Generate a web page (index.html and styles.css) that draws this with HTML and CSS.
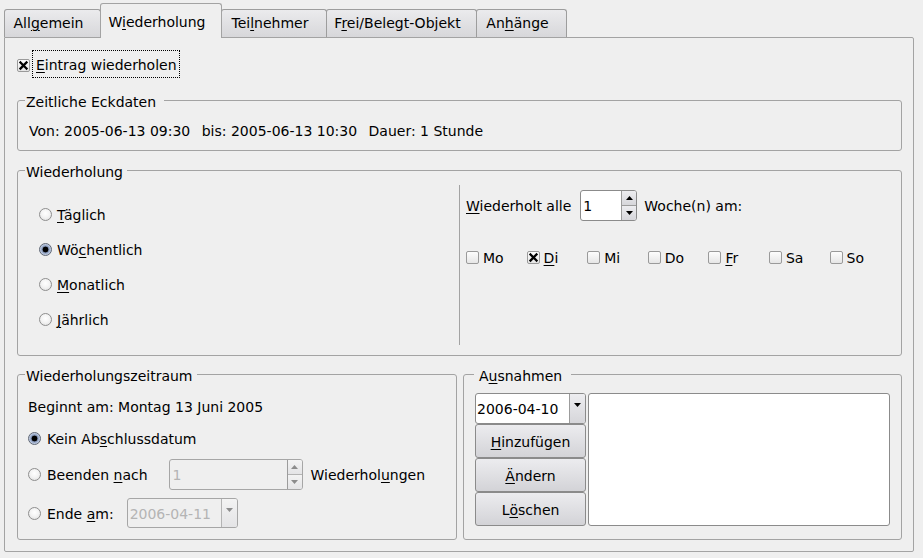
FILE: index.html
```html
<!DOCTYPE html>
<html lang="de">
<head>
<meta charset="utf-8">
<title>Wiederholung</title>
<link rel="stylesheet" href="styles.css">
</head>
<body>
<div class="window">
  <div class="tabbar">
    <div class="tab tab-allgemein">All<u>g</u>emein</div>
    <div class="tab tab-wiederholung active">W<u>i</u>ederholung</div>
    <div class="tab tab-teilnehmer">Tei<u>l</u>nehmer</div>
    <div class="tab tab-frei">F<u>r</u>ei/Belegt-Objekt</div>
    <div class="tab tab-anhaenge">An<u>h</u>änge</div>
  </div>

  <div class="panel">
    <div class="repeat-row">
      <span class="check checked"><svg width="11" height="11" viewBox="0 0 11 11"><path d="M2.5 2.5 L8.5 8.5 M8.5 2.5 L2.5 8.5" stroke="#000" stroke-width="2.3" stroke-linecap="square"/></svg></span>
      <span class="focus-label"><u>E</u>intrag wiederholen</span>
    </div>

    <fieldset class="group group-zeit">
      <legend>Zeitliche Eckdaten</legend>
      <div class="zeit-body">
        <span>Von: 2005-06-13 09:30</span>
        <span class="sep">bis: 2005-06-13 10:30</span>
        <span class="sep">Dauer: 1 Stunde</span>
      </div>
    </fieldset>

    <fieldset class="group group-wdh">
      <legend>Wiederholung</legend>
      <div class="wdh-body">
        <div class="freq">
          <div class="radio-row"><span class="radio"></span><span><u>T</u>äglich</span></div>
          <div class="radio-row"><span class="radio on"></span><span>Wö<u>c</u>hentlich</span></div>
          <div class="radio-row"><span class="radio"></span><span><u>M</u>onatlich</span></div>
          <div class="radio-row"><span class="radio"></span><span><u>J</u>ährlich</span></div>
        </div>
        <div class="weekly">
          <div class="interval-row">
            <span><u>W</u>iederholt alle</span>
            <div class="spin spin-interval">
              <span class="spin-value">1</span>
              <span class="spin-btns">
                <span class="spin-btn"><svg width="7" height="4" viewBox="0 0 7 4"><path d="M0 4 L3.5 0 L7 4Z"/></svg></span>
                <span class="spin-btn"><svg width="7" height="4" viewBox="0 0 7 4"><path d="M0 0 L7 0 L3.5 4Z"/></svg></span>
              </span>
            </div>
            <span>Woche(n) am:</span>
          </div>
          <div class="days">
            <div class="day"><span class="check"></span><span>Mo</span></div>
            <div class="day"><span class="check checked"><svg width="11" height="11" viewBox="0 0 11 11"><path d="M2.5 2.5 L8.5 8.5 M8.5 2.5 L2.5 8.5" stroke="#000" stroke-width="2.3" stroke-linecap="square"/></svg></span><span><u>D</u>i</span></div>
            <div class="day"><span class="check"></span><span>Mi</span></div>
            <div class="day"><span class="check"></span><span>Do</span></div>
            <div class="day"><span class="check"></span><span><u>F</u>r</span></div>
            <div class="day"><span class="check"></span><span>Sa</span></div>
            <div class="day"><span class="check"></span><span>So</span></div>
          </div>
        </div>
      </div>
    </fieldset>

    <div class="bottom">
      <fieldset class="group group-zeitraum">
        <legend>Wiederholungszeitraum</legend>
        <div class="zeitraum-body">
          <div class="begin">Beginnt am: Montag 13 Juni 2005</div>
          <div class="radio-row row-kein"><span class="radio on"></span><span>Kein Ab<u>s</u>chlussdatum</span></div>
          <div class="radio-row row-beenden">
            <span class="radio"></span><span>Beenden <u>n</u>ach</span>
            <div class="spin spin-count disabled">
              <span class="spin-value">1</span>
              <span class="spin-btns">
                <span class="spin-btn"><svg width="7" height="4" viewBox="0 0 7 4"><path d="M0 4 L3.5 0 L7 4Z"/></svg></span>
                <span class="spin-btn"><svg width="7" height="4" viewBox="0 0 7 4"><path d="M0 0 L7 0 L3.5 4Z"/></svg></span>
              </span>
            </div>
            <span class="after-spin">Wiederhol<u>u</u>ngen</span>
          </div>
          <div class="radio-row row-ende">
            <span class="radio"></span><span>Ende <u>a</u>m:</span>
            <div class="combo combo-ende disabled">
              <span class="combo-value">2006-04-11</span>
              <span class="combo-btn"><svg width="7" height="4" viewBox="0 0 7 4"><path d="M0 0 L7 0 L3.5 4Z"/></svg></span>
            </div>
          </div>
        </div>
      </fieldset>

      <fieldset class="group group-ausnahmen">
        <legend>A<u>u</u>snahmen</legend>
        <div class="ausnahmen-body">
          <div class="ausnahmen-controls">
            <div class="combo combo-date">
              <span class="combo-value">2006-04-10</span>
              <span class="combo-btn"><svg width="7" height="4" viewBox="0 0 7 4"><path d="M0 0 L7 0 L3.5 4Z"/></svg></span>
            </div>
            <div class="button"><u>H</u>inzufügen</div>
            <div class="button"><u>Ä</u>ndern</div>
            <div class="button">L<u>ö</u>schen</div>
          </div>
          <div class="listbox"></div>
        </div>
      </fieldset>
    </div>
  </div>
</div>
</body>
</html>
```

FILE: styles.css
```css
* { box-sizing: border-box; }

html, body {
  margin: 0;
  background: #efefef;
}

body {
  font-family: "DejaVu Sans", "Liberation Sans", sans-serif;
  font-size: 14px;
  line-height: 17px;
  color: #000;
}

u {
  text-decoration: underline;
  text-decoration-thickness: 1px;
  text-underline-offset: 2px;
}

.window {
  padding: 3px 0 0 4px;
  width: 914px;
}

/* ---------- tabs ---------- */
.tabbar {
  display: flex;
  align-items: flex-end;
  height: 34px;
}

.tab {
  height: 28px;
  margin-left: -1px;
  padding: 5px 8px 0 0;
  border: 1px solid #9d9d9d;
  border-bottom: 0;
  border-radius: 3px 3px 0 0;
  background: linear-gradient(#ebebed, #d7d7da);
  text-align: center;
  white-space: nowrap;
}

.tab:first-child { margin-left: 0; }

.tab.active {
  position: relative;
  z-index: 1;
  height: 35px;
  margin-bottom: -1px;
  padding-top: 10px;
  background: #efefef;
  border-color: #a3a3a3;
}

.tab-allgemein { width: 97px; }
.tab-wiederholung { width: 122px; }
.tab-teilnehmer { width: 106px; }
.tab-frei { width: 151px; }
.tab-anhaenge { width: 91px; }

/* ---------- panel ---------- */
.panel {
  width: 910px;
  border: 1px solid #a3a3a3;
  border-radius: 0 2px 2px 2px;
  padding: 12px 11px 11px 12px;
}

.repeat-row {
  display: flex;
  align-items: center;
  height: 28px;
}

.repeat-row .check { margin-top: 3px; }

.focus-label {
  margin-left: 2px;
  height: 28px;
  padding: 6px 2px 0 3px;
  border: 1px dotted #000;
}

/* ---------- checkbox / radio ---------- */
.check {
  display: inline-flex;
  align-items: center;
  justify-content: center;
  flex: none;
  width: 13px;
  height: 13px;
  border: 1px solid #9a9a9a;
  border-radius: 2px;
  background: linear-gradient(#fdfdfd, #e6e6e6);
}

.radio {
  display: inline-block;
  flex: none;
  width: 13px;
  height: 13px;
  border: 1px solid #8e8e8e;
  border-radius: 50%;
  background: radial-gradient(circle at 50% 40%, #ffffff 0, #f4f4f4 45%, #dcdcdc 100%);
}

.radio.on {
  border-color: #5e6674;
  background: radial-gradient(circle, #000 0, #000 2.6px, #7b8aa8 3.2px, #9fb0cf 4.2px, #c8d2e4 5.5px);
}

.radio-row {
  display: flex;
  align-items: center;
  height: 17px;
}

.radio-row > span:not(.radio) { padding-top: 2px; }

.radio-row .radio { margin-right: 5px; }

/* ---------- group boxes ---------- */
.group {
  margin: 0;
  padding: 0;
  min-width: 0;
  border: 1px solid #a3a3a3;
  border-radius: 3px;
}

.group legend {
  margin-left: 7px;
  padding: 4px 4px 0 1px;
  line-height: 17px;
}

.group-zeit { margin-top: 12px; }

.group-zeit legend { padding-right: 8px; }

.zeit-body {
  padding: 12px 11px 10px 11px;
  white-space: nowrap;
}

.zeit-body .sep { margin-left: 7px; }

.group-wdh { margin-top: 9px; }

.wdh-body {
  display: grid;
  grid-template-columns: 441px 1fr;
}

.freq {
  display: flex;
  flex-direction: column;
  gap: 18px;
  padding: 25px 0 27px 21px;
}

.weekly {
  margin: 4px 0 10px;
  padding: 5px 0 0 6px;
  border-left: 1px solid #a3a3a3;
}

.interval-row {
  display: flex;
  align-items: center;
  height: 30px;
}

.interval-row > span { padding-top: 2px; }

.spin-interval {
  width: 57px;
  height: 30px;
  margin: 0 7px 0 9px;
}

.days {
  display: grid;
  grid-template-columns: repeat(7, 60.6px);
  margin-top: 29px;
}

.day {
  display: flex;
  align-items: center;
  gap: 4px;
  height: 17px;
}

.day > span:last-child { padding-top: 2px; }

/* ---------- spin / combo ---------- */
.spin,
.combo {
  display: flex;
  flex: none;
  height: 31px;
  border: 1px solid #8b8b8b;
  border-radius: 3px;
  background: #fff;
  overflow: hidden;
}

.spin-value,
.combo-value {
  flex: 1;
  display: flex;
  align-items: center;
  padding-left: 2px;
  padding-top: 2px;
  white-space: nowrap;
}

.spin-btns {
  display: flex;
  flex-direction: column;
  width: 15px;
  border-left: 1px solid #9c9c9c;
}

.spin-btn {
  flex: 1;
  display: flex;
  align-items: center;
  justify-content: center;
  background: linear-gradient(#ededf0, #d6d6da);
}

.spin-btn + .spin-btn { border-top: 1px solid #9c9c9c; }

.spin-btn svg,
.combo-btn svg { fill: #000; }

.combo-btn {
  display: flex;
  align-items: flex-start;
  justify-content: center;
  padding-top: 9px;
  width: 16px;
  border-left: 1px solid #9c9c9c;
  background: linear-gradient(#ededf0, #d6d6da);
}

.disabled {
  background: #efefef;
  border-color: #a6a6a6;
  color: #b4b4b4;
}

.disabled .spin-btn,
.disabled .combo-btn {
  background: linear-gradient(#f3f3f3, #e4e4e6);
  border-color: #b4b4b4;
}

.disabled svg { fill: #8c8c8c; }

/* ---------- bottom groups ---------- */
.bottom {
  display: grid;
  grid-template-columns: 440px 439px;
  gap: 6px;
  margin-top: 8px;
}

.zeitraum-body {
  padding: 14px 10px 11px 10px;
}

.radio-row.row-kein { margin-top: 14px; }

.zeitraum-body .radio-row .radio { margin-right: 6px; }

.row-beenden {
  margin-top: 12px;
  height: 31px;
}

.spin-count {
  width: 134px;
  margin-left: 21px;
}

.spin-count .spin-value { padding-left: 3px; }

.after-spin { margin-left: 8px; }

.row-ende {
  margin-top: 8px;
  height: 30px;
}

.combo-ende {
  width: 111px;
  height: 30px;
  margin-left: 13px;
}

.group-ausnahmen legend {
  margin-left: 10px;
  padding-left: 5px;
  padding-right: 9px;
}

.ausnahmen-body {
  display: grid;
  grid-template-columns: 111px 1fr;
  gap: 2px;
  padding: 8px 11px 13px 11px;
}

.ausnahmen-controls {
  display: flex;
  flex-direction: column;
}

.combo-date {
  width: 111px;
  height: 31px;
}

.combo-date .combo-value { padding-left: 1px; }

.button {
  display: flex;
  align-items: center;
  justify-content: center;
  height: 34px;
  padding-top: 2px;
  border: 1px solid #8b8b8b;
  border-radius: 3px;
  background: linear-gradient(#ececef, #d3d3d7);
}

.listbox {
  border: 1px solid #8b8b8b;
  border-radius: 3px;
  background: #fff;
}
```
